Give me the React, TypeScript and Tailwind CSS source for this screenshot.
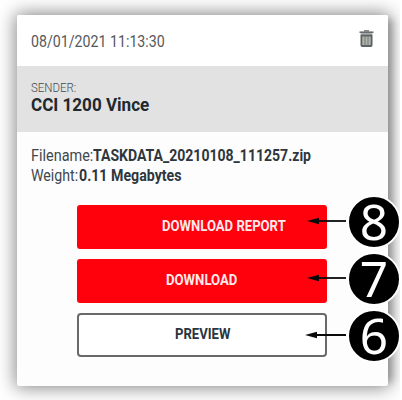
import { useLayoutEffect, useRef, useState } from "react";
import type { ReactNode } from "react";

/* Text condensed horizontally to a given width. */
function Condensed({ width, className = "", children }: { width: number; className?: string; children: ReactNode }) {
  const ref = useRef<HTMLSpanElement>(null);
  const [scale, setScale] = useState(1);
  useLayoutEffect(() => {
    if (ref.current) setScale(width / ref.current.offsetWidth);
  }, [width]);
  return (
    <span className={`block whitespace-nowrap ${className}`} style={{ width }}>
      <span ref={ref} className="inline-block origin-left" style={{ transform: `scaleX(${scale})` }}>
        {children}
      </span>
    </span>
  );
}

function TrashIcon() {
  return (
    <svg className="mt-[15px] h-[17px] w-[15px]" viewBox="0 0 15 17" fill="none">
      <path d="M5 .9h5" stroke="#555" strokeWidth="1.2" />
      <path d="M0.5 2.2h14" stroke="#5f6465" strokeWidth="1.5" />
      <path d="M1.8 3.8h11.4" stroke="#a9abab" strokeWidth="1.7" />
      <path d="M2.4 5.5h10.2v9.7q0 .8-.8.8H3.2q-.8 0-.8-.8z" fill="#aeb4aa" stroke="#5c6164" strokeWidth="1.8" />
      <path d="M6 6v9.5M9 6v9.5" stroke="#737b76" strokeWidth="1" />
    </svg>
  );
}

function Callout({ digit, className, tail }: { digit: string; className: string; tail: number }) {
  return (
    <div className={`absolute right-[1px] flex items-center ${className}`}>
      <svg className="-mt-[3px] h-[8px]" width={tail} height="8" viewBox={`0 0 ${tail} 8`}>
        <path d={`M8 4H${tail}`} stroke="#0a0a0a" strokeWidth="1.8" />
        <path d="M0 4L12 0.8V7.2Z" fill="#0a0a0a" />
      </svg>
      <div className="ml-[1px] flex size-[54px] items-center justify-center rounded-full border-2 border-white bg-black font-['Noto_Sans','Open_Sans',sans-serif] text-[49.5px] leading-[50px] text-white">
        <span className="-mt-[2px]">{digit}</span>
      </div>
    </div>
  );
}

export default function App() {
  return (
    <div className="relative h-[400px] w-[402px] overflow-hidden bg-white font-[Roboto,'Liberation_Sans',sans-serif] text-[#3d474d]">
      <div className="h-[400px] w-[400px] overflow-hidden pl-[16.5px] pt-[15px]">
        <main className="h-[371px] w-[371.5px] rounded-[2px] bg-[#fdfdfd] shadow-[0_0_18px_2px_rgba(0,0,0,0.46),9px_0_7px_-4px_rgba(0,0,0,0.2)]">
          <header className="flex h-[51px] justify-between rounded-t-[2px] bg-white pl-[14.5px] pr-[14px]">
            <Condensed width={133.5} className="pt-[16px] text-[17px] leading-[20px] text-[#55585a]">08/01/2021 11:13:30</Condensed>
            <TrashIcon />
          </header>
          <section className="h-[66px] bg-[#e2e2e2] pl-[14.5px] pt-[15px]">
            <Condensed width={45} className="text-[13px] font-light leading-[14px] text-[#454b4f]">SENDER:</Condensed>
            <Condensed width={118} className="text-[18.5px] font-bold leading-[21px] text-[#20282d]">CCI 1200 Vince</Condensed>
          </section>
          <section className="pl-[14.5px] pt-[13px] text-[17px] leading-[20px]">
            <div className="flex">
              <Condensed width={62}>Filename:</Condensed>
              <Condensed width={218} className="font-bold text-[#2d373d]">TASKDATA_20210108_111257.zip</Condensed>
            </div>
            <div className="flex">
              <Condensed width={47.5}>Weight:</Condensed>
              <Condensed width={102.5} className="font-bold text-[#2d373d]">0.11 Megabytes</Condensed>
            </div>
          </section>
          <div className="ml-[60.5px] mt-[20px] flex w-[250px] flex-col gap-[10px] text-[15px] font-bold leading-[18px]">
            <button className="flex h-[44px] rounded-[3px] bg-[#ff000d] pl-[84.5px] pt-[12px] text-[#ffe9e9]">
              <Condensed width={124}>DOWNLOAD REPORT</Condensed>
            </button>
            <button className="flex h-[44px] rounded-[3px] bg-[#ff000d] pl-[89px] pt-[12px] text-[#ffe9e9]">
              <Condensed width={71}>DOWNLOAD</Condensed>
            </button>
            <button className="flex h-[44px] rounded-[4px] border-2 border-[#68696a] bg-white pl-[96px] pt-[10px] text-[#29353c]">
              <Condensed width={55}>PREVIEW</Condensed>
            </button>
          </div>
        </main>
      </div>
      <Callout digit="8" tail={39} className="top-[195px]" />
      <Callout digit="7" tail={39} className="top-[252px]" />
      <Callout digit="6" tail={41} className="top-[309px]" />
    </div>
  );
}
